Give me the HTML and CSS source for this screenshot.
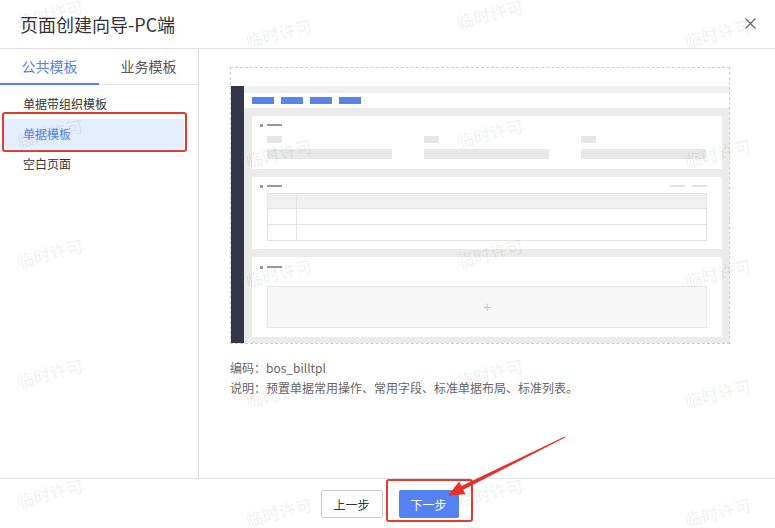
FILE: index.html
```html
<!DOCTYPE html>
<html lang="zh">
<head>
<meta charset="utf-8">
<title>页面创建向导-PC端</title>
<link rel="stylesheet" href="styles.css">
</head>
<body>
<div class="dialog">
  <header class="hd">
    <span class="title">页面创建向导-PC端</span>
    <span class="close" aria-label="关闭">
      <svg width="11" height="11" viewBox="0 0 11 11"><path d="M0.5 0.5L10.5 10.5M10.5 0.5L0.5 10.5" stroke="#666" stroke-width="1.2" fill="none"/></svg>
    </span>
  </header>
  <div class="body">
    <aside class="side">
      <div class="tabs">
        <div class="tab active">公共模板</div>
        <div class="tab">业务模板</div>
      </div>
      <ul class="list">
        <li>单据带组织模板</li>
        <li class="sel">单据模板</li>
        <li>空白页面</li>
      </ul>
    </aside>
    <section class="content">
      <div class="preview">
        <div class="pv-top"></div>
        <div class="pv-main">
          <div class="pv-nav"></div>
          <div class="pv-page">
            <div class="pv-band"></div>
            <div class="pv-toolbar">
              <span class="pill"></span><span class="pill"></span><span class="pill"></span><span class="pill"></span>
            </div>
            <div class="pv-cards">
              <div class="card c1">
                <div class="card-hd"><span class="dot"></span><span class="dash"></span></div>
                <div class="fields">
                  <div class="field"><span class="lbl"></span><span class="inp"></span></div>
                  <div class="field"><span class="lbl"></span><span class="inp"></span></div>
                  <div class="field"><span class="lbl"></span><span class="inp"></span></div>
                </div>
              </div>
              <div class="card c2">
                <div class="card-hd"><span class="dot"></span><span class="dash"></span><span class="grow"></span><span class="dash"></span><span class="dash"></span></div>
                <div class="tbl">
                  <div class="tr th"><span class="td first"></span><span class="td"></span></div>
                  <div class="tr"><span class="td first"></span><span class="td"></span></div>
                  <div class="tr"><span class="td first"></span><span class="td"></span></div>
                </div>
              </div>
              <div class="card c3">
                <div class="card-hd"><span class="dot"></span><span class="dash"></span></div>
                <div class="addbox">+</div>
              </div>
            </div>
          </div>
        </div>
      </div>
      <div class="meta">
        <p>编码：bos_billtpl</p>
        <p>说明：预置单据常用操作、常用字段、标准单据布局、标准列表。</p>
      </div>
    </section>
  </div>
  <footer class="ft">
    <button class="btn">上一步</button>
    <button class="btn primary">下一步</button>
  </footer>

  <div class="mark mark-sel"></div>
  <div class="mark mark-next"></div>
  <svg class="arrow" width="775" height="528" viewBox="0 0 775 528">
    <polygon points="448,495.5 459.2,481.6 461.4,486.1 564.8,436.6 565.2,437.4 463.2,489.7 465.4,494.2" fill="#e8302a"/>
  </svg>

  <div class="wm-layer">
    <span class="wm" style="left:16px;top:4px">临时许可</span>
    <span class="wm" style="left:16px;top:123px">临时许可</span>
    <span class="wm" style="left:16px;top:243px">临时许可</span>
    <span class="wm" style="left:16px;top:363px">临时许可</span>
    <span class="wm" style="left:16px;top:483px">临时许可</span>
    <span class="wm" style="left:245px;top:23px">临时许可</span>
    <span class="wm" style="left:245px;top:143px">临时许可</span>
    <span class="wm" style="left:245px;top:263px">临时许可</span>
    <span class="wm" style="left:245px;top:383px">临时许可</span>
    <span class="wm" style="left:245px;top:502px">临时许可</span>
    <span class="wm" style="left:456px;top:4px">临时许可</span>
    <span class="wm" style="left:456px;top:123px">临时许可</span>
    <span class="wm" style="left:456px;top:243px">临时许可</span>
    <span class="wm" style="left:456px;top:363px">临时许可</span>
    <span class="wm" style="left:456px;top:483px">临时许可</span>
    <span class="wm" style="left:684px;top:23px">临时许可</span>
    <span class="wm" style="left:684px;top:143px">临时许可</span>
    <span class="wm" style="left:684px;top:263px">临时许可</span>
    <span class="wm" style="left:684px;top:383px">临时许可</span>
    <span class="wm" style="left:684px;top:502px">临时许可</span>
  </div>
</div>
</body>
</html>
```

FILE: styles.css
```css
* { box-sizing: border-box; }
html, body { margin: 0; padding: 0; background: #fff; }
body {
  font-family: "Noto Sans CJK SC", "Liberation Sans", sans-serif;
  color: #333;
  overflow: hidden;
}
.dialog {
  position: relative;
  width: 775px;
  height: 528px;
  display: flex;
  flex-direction: column;
  overflow: hidden;
}
.hd {
  height: 49px;
  flex: none;
  border-bottom: 1px solid #e0e0e0;
  display: flex;
  align-items: center;
  justify-content: space-between;
  padding: 0 19px 1px 20px;
}
.title {
  font-size: 18px;
  line-height: 24px;
  color: #333;
}
.close { display: flex; width: 11px; height: 11px; }

.body {
  flex: 1;
  display: flex;
  min-height: 0;
}
.side {
  width: 199px;
  flex: none;
  border-right: 1px solid #dcdcdc;
}
.tabs {
  display: flex;
  height: 36px;
  border-bottom: 1px solid #e3e3e3;
}
.tab {
  position: relative;
  width: 99px;
  font-size: 14px;
  line-height: 35px;
  text-align: center;
  color: #555;
}
.tab.active { color: #5582f3; }
.tab.active::after {
  content: "";
  position: absolute;
  left: 0; right: 0; bottom: -1px;
  height: 2px;
  background: #5582f3;
}
.list {
  list-style: none;
  margin: 0;
  padding: 4px 0 0;
}
.list li {
  height: 30px;
  line-height: 30px;
  font-size: 12px;
  padding-left: 20px;
  margin: 0 14px 0 3px;
  color: #333;
}
.list li.sel {
  background: #e5eefd;
  color: #5582f3;
}

.content {
  flex: 1;
  padding: 18px 0 0 31px;
}
.preview {
  width: 500px;
  height: 277px;
  border: 1px dashed #cfcfcf;
  display: flex;
  flex-direction: column;
}
.pv-top { height: 18px; flex: none; background: #fff; }
.pv-main { flex: 1; display: flex; }
.pv-nav { width: 13px; background: #343747; }
.pv-page { flex: 1; display: flex; flex-direction: column; }
.pv-band { height: 7px; background: #f0f0f0; }
.pv-toolbar {
  height: 15px;
  background: #fff;
  display: flex;
  align-items: center;
  gap: 7px;
  padding-left: 8px;
}
.pill { width: 22px; height: 7px; background: #5a84e8; }
.pv-cards {
  flex: 1;
  background: #ebebeb;
  padding: 8px 7px 6px 8px;
  display: flex;
  flex-direction: column;
  gap: 8px;
}
.card {
  background: #fff;
  padding: 7px 15px 0 8px;
}
.c1 { height: 53px; }
.c2 { height: 72px; }
.c3 { height: 80px; padding-top: 8px; }
.card-hd {
  display: flex;
  align-items: center;
  height: 4px;
  gap: 4px;
}
.dot { width: 3px; height: 3px; background: #9a9a9a; }
.dash { width: 15px; height: 2px; background: #999; }
.card-hd .grow { flex: 1; }
.c2 .card-hd .dash:last-child, .c2 .card-hd .dash:nth-last-child(2) { background: #e2e2e2; height: 2px; }
.c2 .card-hd { gap: 4px; }
.c2 .card-hd .dash:last-child { margin-left: 3px; }
.fields {
  display: flex;
  gap: 32px;
  margin: 9px 0 0 7px;
}
.field { width: 125px; display: flex; flex-direction: column; }
.lbl { width: 15px; height: 7px; background: #e6e6e6; }
.inp { height: 10px; margin-top: 6px; background: #e8e8e8; }
.tbl {
  margin: 5px 0 0 7px;
  border: 1px solid #e3e3e3;
}
.tr { display: flex; height: 16px; border-top: 1px solid #e3e3e3; }
.tr.th { height: 14px; border-top: 0; background: #f0f0f0; }
.td { flex: 1; }
.td.first { flex: none; width: 29px; border-right: 1px solid #e3e3e3; }
.addbox {
  margin: 17px 0 0 7px;
  height: 42px;
  border: 1px solid #e6e6e6;
  background: #f7f7f7;
  color: #c8c8c8;
  font-family: "Liberation Sans", sans-serif;
  font-size: 14px;
  line-height: 40px;
  text-align: center;
}
.meta {
  margin-top: 14px;
  font-size: 12px;
  color: #666;
}
.meta p { margin: 0; line-height: 20px; }

.ft {
  height: 50px;
  flex: none;
  border-top: 1px solid #e3e3e3;
  display: flex;
  justify-content: center;
  align-items: flex-start;
  gap: 16px;
  padding: 11px 0 0 4px;
}
.btn {
  width: 62px;
  height: 28px;
  border: 1px solid #cfcfcf;
  border-radius: 2px;
  background: #fff;
  color: #333;
  font-family: "Noto Sans CJK SC", sans-serif;
  font-size: 12px;
  padding: 0;
}
.btn.primary {
  width: 60px;
  background: #5582f3;
  border-color: #5582f3;
  color: #fff;
}

.mark {
  position: absolute;
  border: 2px solid #e53a2e;
  border-radius: 3px;
}
.mark-sel { left: 2px; top: 112px; width: 185px; height: 40px; }
.mark-next { left: 386px; top: 479px; width: 87px; height: 43px; }
.arrow { position: absolute; left: 0; top: 0; pointer-events: none; }

.wm-layer { position: absolute; inset: 0; pointer-events: none; }
.wm {
  position: absolute;
  font-size: 17px;
  line-height: 20px;
  color: rgba(0, 0, 0, 0.075);
  transform: rotate(-14deg);
  white-space: nowrap;
}
```
